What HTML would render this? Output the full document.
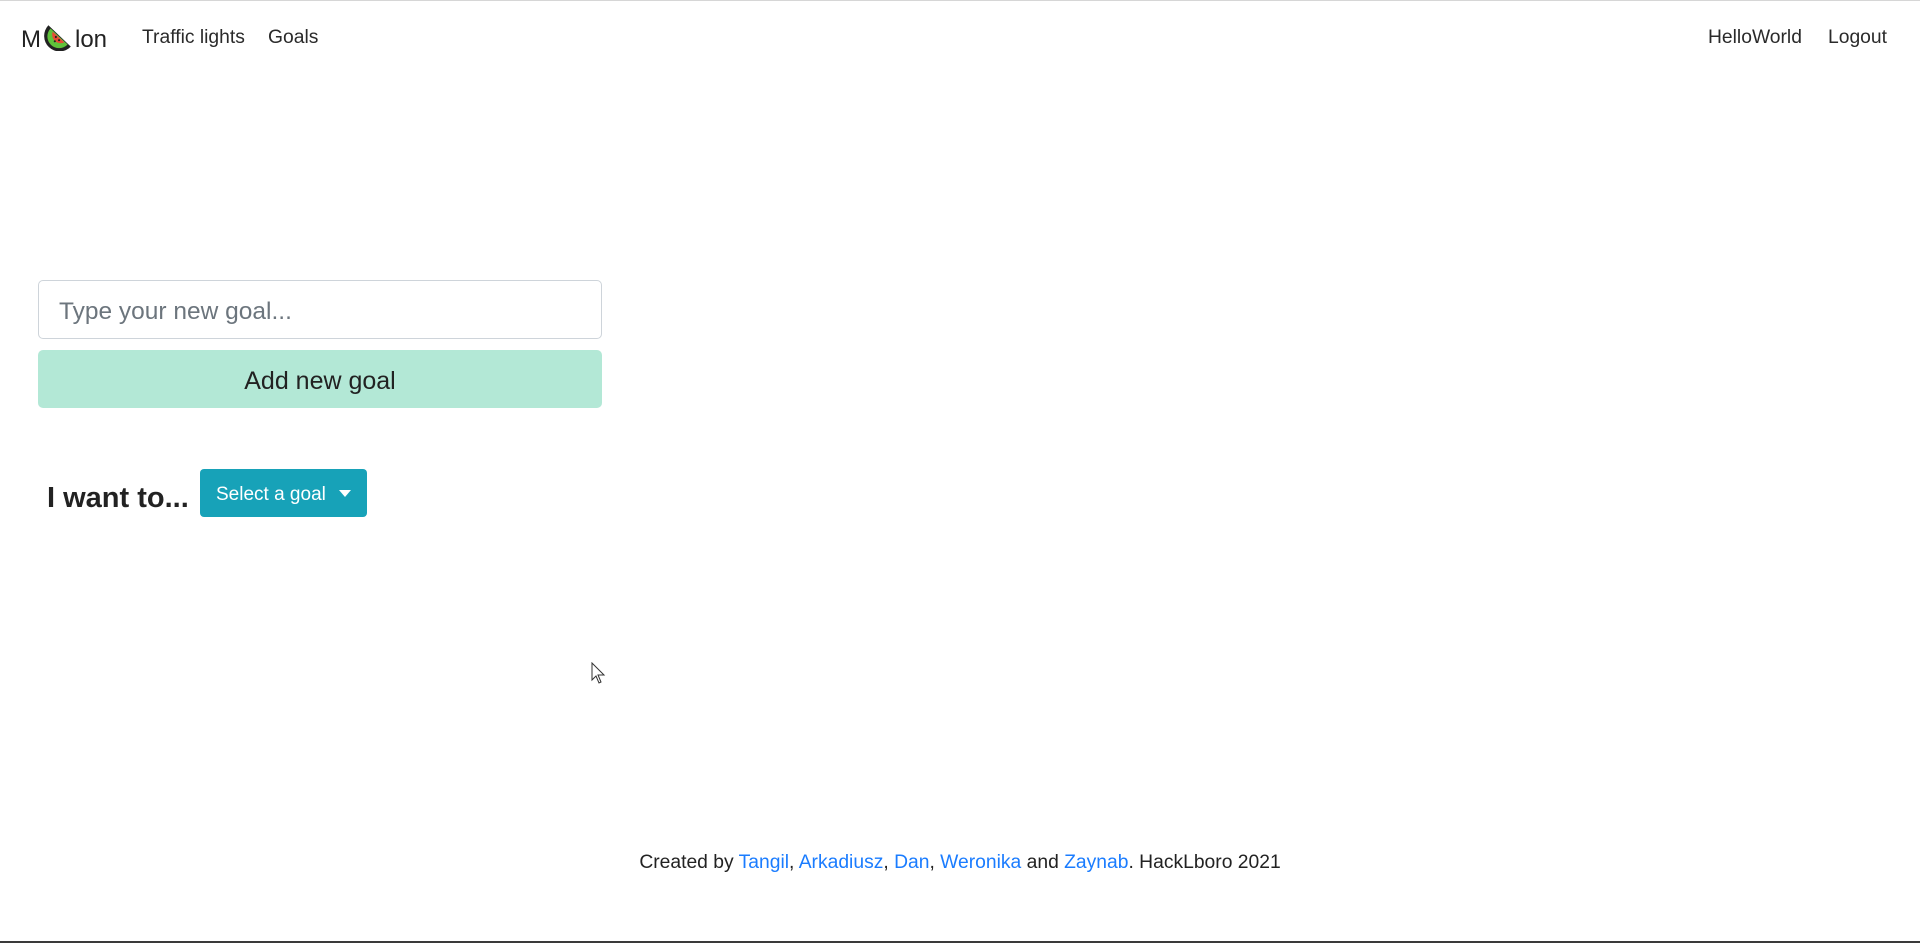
<!DOCTYPE html>
<html><head><meta charset="utf-8"><style>
html,body{margin:0;padding:0;}
body{width:1920px;height:943px;position:relative;background:#fff;font-family:"Liberation Sans",sans-serif;color:#212529;overflow:hidden;}
.topline{position:absolute;left:0;top:0;width:1920px;height:1px;background:#d6d6d6;}
.botline{position:absolute;left:0;top:941px;width:1920px;height:2px;background:#3a3a3a;}
.t{position:absolute;white-space:nowrap;}
.nav{font-size:19.3px;color:#2a2a2a;top:27px;}
.brand{font-size:24px;top:23px;left:21px;color:#222;}
.input{position:absolute;left:38px;top:280px;width:564px;height:59px;border:1.5px solid #ced4da;border-radius:5px;box-sizing:border-box;}
.input span{position:absolute;left:20px;top:17px;font-size:24.5px;color:#6c757d;}
.btn{position:absolute;left:38px;top:350px;width:564px;height:58px;background:#b3e8d6;border-radius:5px;text-align:center;line-height:62px;font-size:25px;color:#222;}
.sel{position:absolute;left:200px;top:469px;width:167px;height:48px;background:#17a2b8;border-radius:4px;color:#fff;font-size:19px;line-height:51px;padding-left:16px;box-sizing:border-box;}
.sel i{position:absolute;right:16px;top:21px;width:0;height:0;border-left:6px solid transparent;border-right:6px solid transparent;border-top:7px solid #fff;}
.foot{top:852px;left:0;width:1920px;text-align:center;font-size:19.3px;color:#222;}
.foot a{color:#1a7cff;text-decoration:none;}
</style></head><body>
<div class="topline"></div>
<div class="t brand">M<svg width="32" height="28" viewBox="0 0 30 26" style="vertical-align:-4px;margin:0 1px"><path d="M6 2 A13 13 0 0 0 27 22 Z" fill="#222"/><path d="M8 5 A10.5 10.5 0 0 0 24 20 Z" fill="#5fc23a"/><path d="M10 8 A8 8 0 0 0 21 18 Z" fill="#e84a35"/><circle cx="13" cy="13" r="1" fill="#222"/><circle cx="16" cy="16" r="1" fill="#222"/><circle cx="12" cy="17" r="1" fill="#222"/></svg>lon</div>
<div class="t nav" style="left:142px">Traffic lights</div>
<div class="t nav" style="left:268px">Goals</div>
<div class="t nav" style="left:1708px">HelloWorld</div>
<div class="t nav" style="left:1828px">Logout</div>
<div class="input"><span>Type your new goal...</span></div>
<div class="btn">Add new goal</div>
<div class="t" style="left:47px;top:482px;font-size:29px;font-weight:bold;color:#222">I want to...</div>
<div class="sel">Select a goal<i></i></div>
<svg style="position:absolute;left:591px;top:662px" width="16" height="24" viewBox="0 0 16 24"><path d="M1 1 L1 18 L5 14 L8 21 L10 20 L7 13 L13 13 Z" fill="#fff" stroke="#333" stroke-width="1"/></svg>
<div class="t foot">Created by <a>Tangil</a>, <a>Arkadiusz</a>, <a>Dan</a>, <a>Weronika</a> and <a>Zaynab</a>. HackLboro 2021</div>
<div class="botline"></div>
</body></html>
